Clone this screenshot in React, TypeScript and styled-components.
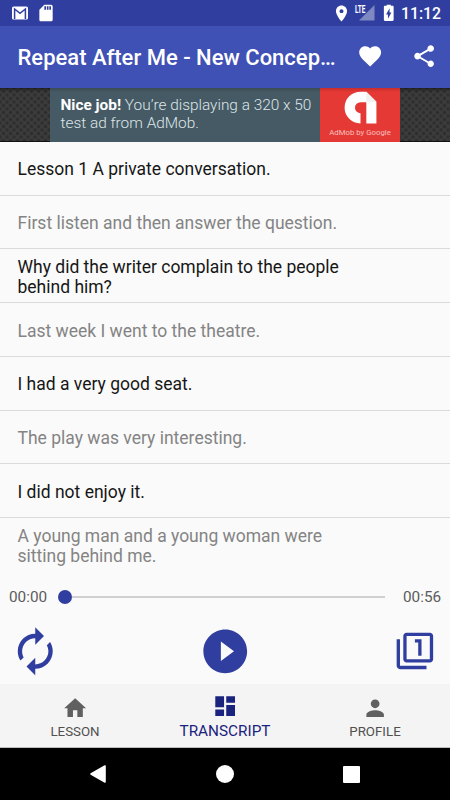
import React from "react";
import styled, { createGlobalStyle } from "styled-components";

const GlobalStyle = createGlobalStyle`
  * { box-sizing: border-box; }
  body { margin: 0; background: #fafafa; font-family: Roboto, "Liberation Sans", sans-serif; }
`;

const Screen = styled.div`
  width: 450px;
  height: 800px;
  display: flex;
  flex-direction: column;
  background: #fafafa;
  overflow: hidden;
`;

const StatusBar = styled.header`
  flex: 0 0 26px;
  height: 26px;
  display: flex;
  align-items: center;
  background: #303f9f;
  color: #fff;
  padding: 0 9px 0 11px;
`;

const StatusIcon = styled.svg<{ $gap?: number }>`
  display: block;
  flex: none;
  margin-left: ${(p) => p.$gap ?? 0}px;
`;

const Clock = styled.span`
  font-size: 15.8px;
  font-weight: 500;
  line-height: 24px;
  margin-left: 3px;
  width: 40px;
  white-space: nowrap;
  padding-top: 2px;
`;

const Spacer = styled.div`
  flex: 1;
`;

const Toolbar = styled.div`
  flex: 0 0 61.5px;
  display: flex;
  align-items: center;
  background: #3f51b5;
  padding: 0 13px 0 17.5px;
`;

const Title = styled.h1`
  margin: 3px 0 0;
  width: 322px;
  color: #fff;
  font-size: 22px;
  font-weight: 500;
  line-height: 30px;
  white-space: nowrap;
`;

const ToolIcon = styled.svg<{ $gap: number }>`
  display: block;
  flex: none;
  margin: -1px 0 0 ${(p) => p.$gap}px;
`;

const AdStrip = styled.div`
  flex: 0 0 54.5px;
  display: flex;
  justify-content: center;
  background-color: #3d3d3d;
  background-image: linear-gradient(rgba(0, 0, 0, 0.4), transparent 4px),
    radial-gradient(circle, #2e2e2e 1.2px, transparent 2.4px),
    radial-gradient(circle, #2e2e2e 1.2px, transparent 2.4px);
  background-size: 100% 100%, 7px 7px, 7px 7px;
  background-position: 0 0, 0 0, 3.5px 3.5px;
  box-shadow: inset 0 -1px 0 #111;
`;

const AdCopy = styled.p`
  margin: 0;
  width: 270px;
  padding: 8px 0 0 10.5px;
  background: linear-gradient(#3a4b53, #455a64 4px);
  color: #dfe5e8;
  font-size: 15.4px;
  font-weight: 300;
  line-height: 18.3px;
  white-space: nowrap;
  b { font-weight: 700; color: #fff; }
`;

const AdBadge = styled.div`
  width: 80px;
  display: flex;
  flex-direction: column;
  align-items: center;
  background: linear-gradient(#c62d2b, #e53935 4px);
  color: #f8c0be;
  font-size: 7.8px;
  line-height: 10px;
  white-space: nowrap;
  svg { display: block; margin: 3.5px 0 4px; }
`;

const Transcript = styled.ul`
  flex: 0 0 428px;
  min-height: 0;
  height: 428px;
  margin: 0;
  padding: 0;
  list-style: none;
`;

const Line = styled.li<{ $muted: boolean }>`
  height: 53.72px;
  display: flex;
  align-items: center;
  padding: 2.6px 100px 0 17.5px;
  border-bottom: 1px solid #dadada;
  color: ${(p) => (p.$muted ? "#848484" : "#161616")};
  font-size: 17.5px;
  line-height: 20.5px;
  &:last-child { height: 52px; border-bottom: 0; padding-top: 4px; }
`;

const SeekRow = styled.div`
  flex: 0 0 52px;
  display: flex;
  align-items: center;
  padding: 2px 9px 0;
  color: #5c5c5c;
  font-size: 15.3px;
`;

const Time = styled.span`
  flex: none;
  width: 39px;
  white-space: nowrap;
`;

const Track = styled.div`
  flex: none;
  width: 327px;
  margin: 0 18px 0 10px;
  display: flex;
  align-items: center;
`;

const Thumb = styled.div`
  width: 14px;
  height: 14px;
  border-radius: 50%;
  background: #303f9f;
`;

const Rail = styled.div`
  flex: 1;
  height: 2px;
  background: #d0d0d0;
`;

const Controls = styled.div`
  flex: 0 0 62px;
  display: flex;
  align-items: center;
  justify-content: space-between;
  padding: 0 15px 4px 9px;
  svg { display: block; }
  svg:nth-child(2) { margin-right: 6.5px; }
`;

const Tabs = styled.nav`
  flex: 0 0 64px;
  display: grid;
  grid-template-columns: repeat(3, 1fr);
  background: #f4f4f4;
  border-bottom: 1px solid #bdbdbd;
`;

const Tab = styled.div<{ $active?: boolean }>`
  display: flex;
  flex-direction: column;
  align-items: center;
  padding-top: ${(p) => (p.$active ? 9 : 11)}px;
  color: ${(p) => (p.$active ? "#1a237e" : "#606060")};
  font-size: ${(p) => (p.$active ? 15.3 : 13.3)}px;
  line-height: 18px;
  svg { display: block; margin-bottom: ${(p) => (p.$active ? 3 : 2)}px; }
  span { color: ${(p) => (p.$active ? "#1a237e" : "#505050")}; }
`;

const SystemNav = styled.footer`
  flex: 1;
  display: flex;
  justify-content: center;
  align-items: center;
  gap: 109px;
  padding-right: 2px;
  background: #000;
`;

const lines = [
  "Lesson 1 A private conversation.",
  "First listen and then answer the question.",
  "Why did the writer complain to the people behind him?",
  "Last week I went to the theatre.",
  "I had a very good seat.",
  "The play was very interesting.",
  "I did not enjoy it.",
  "A young man and a young woman were sitting behind me.",
];

const tabs = [
  { label: "LESSON", path: "M10 20v-6h4v6h5v-8h3L12 3 2 12h3v8z" },
  { label: "TRANSCRIPT", path: "M3 13h8V3H3v10zm0 8h8v-6H3v6zm10 0h8V11h-8v10zm0-18v6h8V3h-8z", active: true },
  { label: "PROFILE", path: "M12 12c2.21 0 4-1.79 4-4s-1.79-4-4-4-4 1.79-4 4 1.79 4 4 4zm0 2c-2.67 0-8 1.34-8 4v2h16v-2c0-2.66-5.33-4-8-4z" },
];

const Glyph = ({ size, path, color = "currentColor" }: { size: number; path: string; color?: string }) => (
  <svg width={size} height={size} viewBox="0 0 24 24" fill={color}>
    <path d={path} />
  </svg>
);

export default function App() {
  return (
    <>
      <GlobalStyle />
      <Screen>
        <StatusBar>
          <StatusIcon width="18" height="18" viewBox="0 0 18 18">
            <rect x="1" y="2.6" width="16" height="13" rx="1.6" fill="#fff" />
            <path d="M3.6 15V5l5.4 4.3L14.4 5v10" fill="none" stroke="#303f9f" strokeWidth="1.5" />
          </StatusIcon>
          <StatusIcon $gap={7} width="20" height="20" viewBox="0 0 24 24" fill="#fff">
            <path d="M18 2h-8L4.02 8 4 20c0 1.1.9 2 2 2h12c1.1 0 2-.9 2-2V4c0-1.1-.9-2-2-2zm-6 6h-2V4h2v4zm3 0h-2V4h2v4zm3 0h-2V4h2v4z" />
          </StatusIcon>
          <Spacer />
          <StatusIcon width="19" height="19" viewBox="0 0 24 24" fill="#fff">
            <path d="M12 2C8.13 2 5 5.13 5 9c0 5.25 7 13 7 13s7-7.75 7-13c0-3.87-3.13-7-7-7zm0 9.5c-1.38 0-2.5-1.12-2.5-2.5s1.12-2.5 2.5-2.5 2.5 1.12 2.5 2.5-1.12 2.5-2.5 2.5z" />
          </StatusIcon>
          <StatusIcon $gap={2.5} width="21" height="18" viewBox="0 0 21 18">
            <path d="M20.5 1v15.5H5z" fill="#7e88c3" />
            <path d="M0 0h12v9.5H0z" fill="#303f9f" />
            <text x="1" y="8.6" textLength="10.5" lengthAdjust="spacingAndGlyphs" fill="#fff" fontSize="10" fontWeight="700">
              LTE
            </text>
          </StatusIcon>
          <StatusIcon $gap={4} width="19.5" height="19.5" viewBox="0 0 24 24" fill="#fff">
            <path d="M16.67 3.5H14.5V2h-5v1.5H7.33C6.6 3.5 6 4.1 6 4.83v15.84C6 21.4 6.6 22 7.33 22h9.33c.74 0 1.34-.6 1.34-1.33V4.83c0-.73-.6-1.33-1.33-1.33zM11 19.5V14H8.7L13 6.5v5.3h2.3z" />
          </StatusIcon>
          <Clock>11:12</Clock>
        </StatusBar>
        <Toolbar>
          <Title>Repeat After Me - New Concep…</Title>
          <ToolIcon $gap={18} width="26.3" height="26.3" viewBox="0 0 24 24" fill="#fff">
            <path d="M12 21.35l-1.45-1.32C5.4 15.36 2 12.28 2 8.5 2 5.42 4.42 3 7.5 3c1.74 0 3.41.81 4.5 2.09C13.09 3.81 14.76 3 16.5 3 19.58 3 22 5.42 22 8.5c0 3.78-3.4 6.86-8.55 11.54L12 21.35z" />
          </ToolIcon>
          <ToolIcon $gap={27} width="26.3" height="26.3" viewBox="0 0 24 24" fill="#fff">
            <path d="M18 16.08c-.76 0-1.44.3-1.96.77L8.91 12.7c.05-.23.09-.46.09-.7s-.04-.47-.09-.7l7.05-4.11c.54.5 1.25.81 2.04.81 1.66 0 3-1.34 3-3s-1.34-3-3-3-3 1.34-3 3c0 .24.04.47.09.7L8.04 9.81C7.5 9.31 6.79 9 6 9c-1.66 0-3 1.34-3 3s1.34 3 3 3c.79 0 1.5-.31 2.04-.81l7.12 4.16c-.05.21-.08.43-.08.65 0 1.61 1.31 2.92 2.92 2.92s2.92-1.31 2.92-2.92-1.31-2.92-2.92-2.92z" />
          </ToolIcon>
        </Toolbar>
        <AdStrip>
          <AdCopy>
            <b>Nice job!</b> You’re displaying a 320 x 50
            <br />
            test ad from AdMob.
          </AdCopy>
          <AdBadge>
            <svg width="33" height="33" viewBox="0 0 34 34">
              <path d="M17 33.5A16.4 16.4 0 0 1 17 .7h6L33.4 11v22.5H23V11.5h-6a5.7 5.7 0 0 0 0 11.4z" fill="#fff" />
              <path d="M23 11.5 33.4 11 23 .7z" fill="#f1f1f1" />
            </svg>
            <span>AdMob by Google</span>
          </AdBadge>
        </AdStrip>
        <Transcript>
          {lines.map((text, i) => (
            <Line key={text} $muted={i % 2 === 1}>
              {text}
            </Line>
          ))}
        </Transcript>
        <SeekRow>
          <Time>00:00</Time>
          <Track>
            <Thumb />
            <Rail />
          </Track>
          <Time>00:56</Time>
        </SeekRow>
        <Controls>
          <Glyph
            size={52.5}
            color="#303f9f"
            path="M12 6v3l4-4-4-4v3c-4.42 0-8 3.58-8 8 0 1.57.46 3.03 1.24 4.26L6.7 14.8c-.45-.83-.7-1.79-.7-2.8 0-3.31 2.69-6 6-6zm6.76 1.74L17.3 9.2c.44.84.7 1.79.7 2.8 0 3.31-2.69 6-6 6v-3l-4 4 4 4v-3c4.42 0 8-3.58 8-8 0-1.57-.46-3.03-1.24-4.26z"
          />
          <Glyph
            size={52.5}
            color="#303f9f"
            path="M12 2C6.48 2 2 6.48 2 12s4.48 10 10 10 10-4.48 10-10S17.52 2 12 2zm-2 14.5v-9l6 4.5-6 4.5z"
          />
          <Glyph
            size={39.8}
            color="#303f9f"
            path="M3 5H1v16c0 1.1.9 2 2 2h16v-2H3V5zm11 10h2V5h-4v2h2v8zm7-14H7c-1.1 0-2 .9-2 2v14c0 1.1.9 2 2 2h14c1.1 0 2-.9 2-2V3c0-1.1-.9-2-2-2zm0 16H7V3h14v14z"
          />
        </Controls>
        <Tabs>
          {tabs.map((tab) => (
            <Tab key={tab.label} $active={tab.active}>
              <Glyph size={26.3} path={tab.path} />
              <span>{tab.label}</span>
            </Tab>
          ))}
        </Tabs>
        <SystemNav>
          <svg width="18" height="20" viewBox="0 0 18 20">
            <path d="M16 2v16L2 10z" fill="#fff" stroke="#fff" strokeWidth="1.6" strokeLinejoin="round" />
          </svg>
          <svg width="18" height="18" viewBox="0 0 18 18">
            <circle cx="9" cy="9" r="9" fill="#fff" />
          </svg>
          <svg width="17" height="17" viewBox="0 0 17 17">
            <rect width="17" height="17" rx="1" fill="#fff" />
          </svg>
        </SystemNav>
      </Screen>
    </>
  );
}
